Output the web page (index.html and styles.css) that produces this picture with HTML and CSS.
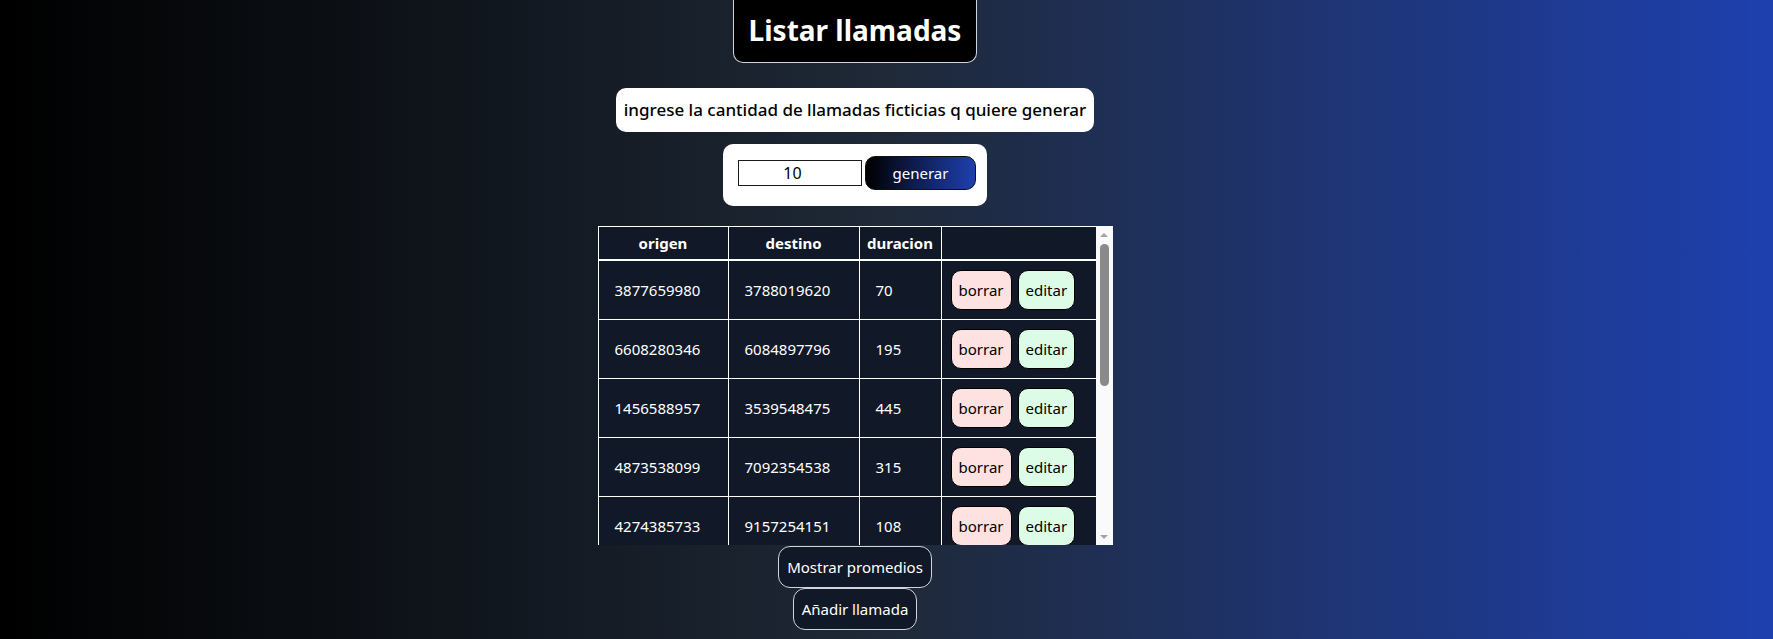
FILE: index.html
```html
<!DOCTYPE html>
<html lang="es">
<head>
<meta charset="utf-8">
<title>Listar llamadas</title>
<link rel="stylesheet" href="styles.css">
</head>
<body>
<main class="page">
  <h1 class="title">Listar llamadas</h1>
  <p class="prompt">ingrese la cantidad de llamadas ficticias q quiere generar</p>
  <form class="gen-form">
    <input class="qty" type="number" value="10">
    <button class="gen-btn" type="button">generar</button>
  </form>
  <div class="table-wrap">
    <div class="table-view">
      <table class="calls">
        <colgroup>
          <col class="c-origen"><col class="c-destino"><col class="c-dur"><col class="c-act">
        </colgroup>
        <thead>
          <tr><th>origen</th><th>destino</th><th>duracion</th><th></th></tr>
        </thead>
        <tbody>
          <tr><td>3877659980</td><td>3788019620</td><td>70</td><td class="actions"><button class="btn-del">borrar</button><button class="btn-edit">editar</button></td></tr>
          <tr><td>6608280346</td><td>6084897796</td><td>195</td><td class="actions"><button class="btn-del">borrar</button><button class="btn-edit">editar</button></td></tr>
          <tr><td>1456588957</td><td>3539548475</td><td>445</td><td class="actions"><button class="btn-del">borrar</button><button class="btn-edit">editar</button></td></tr>
          <tr><td>4873538099</td><td>7092354538</td><td>315</td><td class="actions"><button class="btn-del">borrar</button><button class="btn-edit">editar</button></td></tr>
          <tr><td>4274385733</td><td>9157254151</td><td>108</td><td class="actions"><button class="btn-del">borrar</button><button class="btn-edit">editar</button></td></tr>
        </tbody>
      </table>
    </div>
    <div class="scrollbar" aria-hidden="true">
      <span class="arrow-up"></span>
      <span class="thumb"></span>
      <span class="arrow-down"></span>
    </div>
  </div>
  <button class="nav-btn" type="button">Mostrar promedios</button>
  <button class="nav-btn" type="button">Añadir llamada</button>
</main>
</body>
</html>
```

FILE: styles.css
```css
html, body {
  margin: 0;
  min-height: 100%;
}

body {
  min-height: 100vh;
  background: linear-gradient(to right, #000000 0%, #1f2937 50%, #1e40af 100%);
  font-family: "Noto Sans", "Open Sans", sans-serif;
  color: #ffffff;
}

.page {
  display: flex;
  flex-direction: column;
  align-items: center;
  padding-right: 63px;
}

.title {
  margin: 0 0 25px;
  padding: 8px 15px 10px;
  background: #000000;
  border: 1px solid #d1d5db;
  border-top: none;
  border-radius: 0 0 10px 10px;
  font-size: 28px;
  line-height: 44px;
  font-weight: 700;
}

.prompt {
  margin: 0 0 12px;
  padding: 0 8px;
  height: 44px;
  line-height: 44px;
  background: #ffffff;
  color: #000000;
  border-radius: 10px;
  font-size: 17px;
  font-weight: 500;
}

.gen-form {
  display: flex;
  align-items: center;
  gap: 3px;
  margin: 0 0 20px;
  padding: 12px 11px 16px 15px;
  background: #ffffff;
  border-radius: 10px;
}

.qty {
  box-sizing: border-box;
  width: 124px;
  height: 26px;
  padding: 0 2px;
  border: 1px solid #1a1a1a;
  font-family: "Noto Sans", sans-serif;
  font-size: 16px;
  text-align: center;
  color: #000;
  background: #fff;
}

.gen-btn {
  box-sizing: border-box;
  width: 111px;
  height: 34px;
  border: 1px solid #111;
  border-radius: 10px;
  background: linear-gradient(to right, #000000, #1e40af);
  color: #ffffff;
  font-family: "Noto Sans", sans-serif;
  font-size: 15px;
}

.table-wrap {
  display: flex;
  width: 515px;
  height: 319px;
  background: #fafafa;
  margin-bottom: 1px;
}

.table-view {
  width: 498px;
  height: 100%;
  overflow: hidden;
}

.scrollbar {
  width: 17px;
  height: 100%;
  display: flex;
  flex-direction: column;
  align-items: center;
  background: #fafafa;
}

.arrow-up,
.arrow-down {
  width: 0;
  height: 0;
  border-left: 4.5px solid transparent;
  border-right: 4.5px solid transparent;
}

.arrow-up {
  margin-top: 7px;
  border-bottom: 4px solid #a3a3a3;
}

.arrow-down {
  margin-top: auto;
  margin-bottom: 6px;
  border-top: 4px solid #a3a3a3;
}

.thumb {
  margin-top: 7px;
  margin-left: 1px;
  width: 9px;
  height: 142px;
  background: #8a8a8a;
  border-radius: 5px;
}

.calls {
  width: 498px;
  table-layout: fixed;
  border-collapse: collapse;
  background: #111827;
  color: #ffffff;
  font-size: 15px;
}

.c-origen { width: 130px; }
.c-destino { width: 131px; }
.c-dur { width: 82px; }
.c-act { width: 155px; }

.calls th,
.calls td {
  border: 1px solid #ffffff;
}

.calls th {
  padding: 5px 4px;
  line-height: 22px;
  font-weight: 700;
  text-align: center;
}

.calls thead tr {
  border-bottom: 2px solid #ffffff;
}

.calls td {
  padding: 9px 16px;
  line-height: 22px;
  text-align: left;
}

.calls td.actions {
  padding: 9px 9px;
  white-space: nowrap;
}

.btn-del,
.btn-edit {
  box-sizing: border-box;
  height: 40px;
  padding: 0 7px;
  border: 1px solid #000000;
  border-radius: 10px;
  color: #000000;
  font-family: "Noto Sans", sans-serif;
  font-size: 15px;
  vertical-align: middle;
}

.btn-del {
  background: #fee2e2;
  margin-right: 6px;
}

.btn-edit {
  background: #dcfce7;
}

.nav-btn {
  box-sizing: border-box;
  height: 42px;
  padding: 0 8px;
  background: #111827;
  color: #ffffff;
  border: 1px solid #d1d5db;
  border-radius: 12px;
  font-family: "Noto Sans", sans-serif;
  font-size: 15px;
}
```
